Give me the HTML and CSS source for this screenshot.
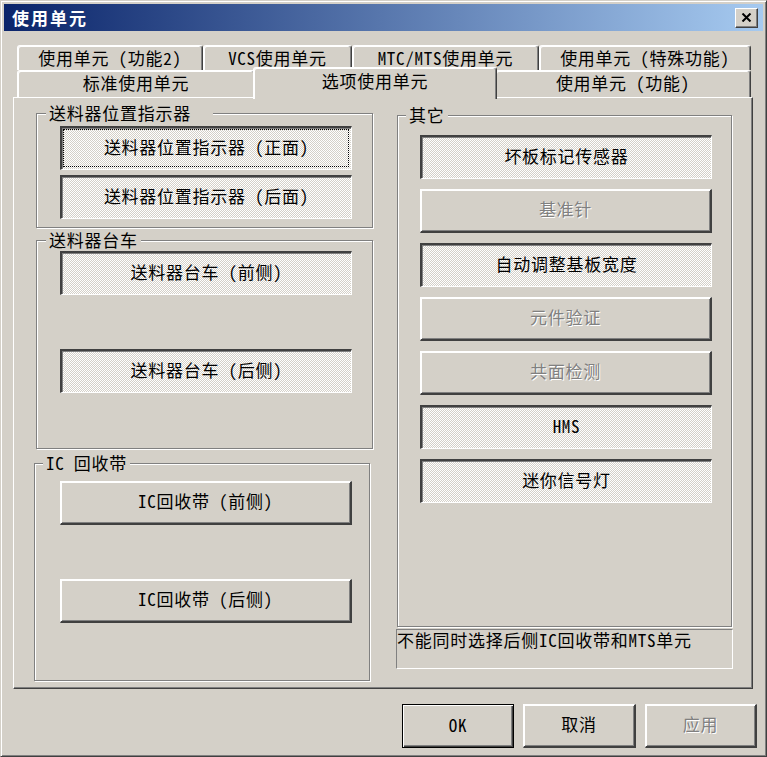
FILE: index.html
```html
<!DOCTYPE html>
<html lang="zh-CN">
<head>
<meta charset="utf-8">
<title>使用单元</title>
<link rel="stylesheet" href="styles.css">
</head>
<body>
<div class="window">
  <div class="titlebar">
    <span class="title">使用单元</span>
    <button class="close" aria-label="关闭">
      <svg width="11" height="9" viewBox="0 0 11 9"><path d="M1.5 0.5L9.5 8.5M9.5 0.5L1.5 8.5" stroke="#000" stroke-width="2" fill="none"/></svg>
    </button>
  </div>
  <div class="content">
    <div class="tabrow row1">
      <div class="tab t1">使用单元 (功能2)</div>
      <div class="tab t2">VCS使用单元</div>
      <div class="tab t3">MTC/MTS使用单元</div>
      <div class="tab t4">使用单元 (特殊功能)</div>
    </div>
    <div class="tabrow row2">
      <div class="tab t5">标准使用单元</div>
      <div class="tab t6 sel">选项使用单元</div>
      <div class="tab t7">使用单元 (功能)</div>
    </div>
    <div class="panel">
      <div class="col">
        <div class="grp g1">
          <span class="grp-label">送料器位置指示器&nbsp;&nbsp;</span>
          <div class="btn on focus b-first">送料器位置指示器 (正面)</div>
          <div class="btn on b-next5">送料器位置指示器 (后面)</div>
        </div>
        <div class="grp g2">
          <span class="grp-label">送料器台车</span>
          <div class="btn on b-g2a">送料器台车 (前侧)</div>
          <div class="btn on b-far">送料器台车 (后侧)</div>
        </div>
        <div class="grp g3">
          <span class="grp-label">IC 回收带</span>
          <div class="btn raised b-g3a">IC回收带 (前侧)</div>
          <div class="btn raised b-far">IC回收带 (后侧)</div>
        </div>
      </div>
      <div class="col">
        <div class="grp g4">
          <span class="grp-label">其它</span>
          <div class="btn on b-r1">坏板标记传感器</div>
          <div class="btn raised disabled b-r">基准针</div>
          <div class="btn on b-r">自动调整基板宽度</div>
          <div class="btn raised disabled b-r">元件验证</div>
          <div class="btn raised disabled b-r">共面检测</div>
          <div class="btn on b-r">HMS</div>
          <div class="btn on b-r">迷你信号灯</div>
        </div>
        <div class="status">不能同时选择后侧IC回收带和MTS单元</div>
      </div>
    </div>
    <div class="actions">
      <div class="btn raised default a-ok">OK</div>
      <div class="btn raised a-cancel">取消</div>
      <div class="btn raised disabled a-apply">应用</div>
    </div>
  </div>
</div>
</body>
</html>
```
FILE: styles.css
```css
* { box-sizing: border-box; }
html, body { margin: 0; padding: 0; }
body {
  width: 767px;
  height: 757px;
  overflow: hidden;
  background: #D4D0C8;
  font-family: "Noto Sans Mono CJK SC", "Noto Sans CJK SC", "Liberation Mono", monospace;
  font-size: 17px;
  letter-spacing: 0.75px;
  color: #000;
}
.window {
  width: 767px;
  height: 757px;
  border: 1px solid;
  border-color: #D4D0C8 #404040 #404040 #D4D0C8;
  box-shadow: inset 1px 1px #fff, inset -1px -1px #808080;
  padding: 3px;
  background: #D4D0C8;
}
.titlebar {
  height: 27px;
  display: flex;
  align-items: center;
  justify-content: space-between;
  padding: 0 5px 0 8px;
  background: linear-gradient(to right, #0A246A, #A6CAF0);
}
.title {
  color: #fff;
  font-weight: bold;
  font-size: 17px;
  letter-spacing: 2px;
  line-height: 20px;
}
.close {
  width: 23px;
  height: 20px;
  padding: 0;
  border: 1px solid;
  border-color: #fff #404040 #404040 #fff;
  box-shadow: inset -1px -1px #808080;
  background: #D4D0C8;
  display: flex;
  align-items: center;
  justify-content: center;
}
.content { padding: 14px 10px 0 9px; }

.tabrow { display: flex; margin-left: 4px; width: 734px; }
.row1 { height: 25px; }
.row2 { height: 27px; align-items: flex-end; }
.tab {
  display: flex;
  align-items: center;
  justify-content: center;
  height: 100%;
  border-style: solid;
  border-width: 1px 1px 0 1px;
  border-color: #fff #404040 transparent #fff;
  box-shadow: inset -1px 0 #808080, inset 1px 1px #fff;
  border-radius: 3px 3px 0 0;
  background: #D4D0C8;
  line-height: 20px;
  white-space: nowrap;
  padding-bottom: 1px;
}
.row2 .tab { padding-bottom: 2px; }
.t1 { width: 186px; }
.t2 { width: 149px; }
.t3 { width: 187px; }
.t4 { width: 212px; }
.t5 { width: 238px; }
.t6 { width: 244px; }
.t7 { width: 256px; }
.tab.sel {
  position: relative;
  z-index: 2;
  height: 32px;
  margin: 0 -2px -2px;
  padding-bottom: 6px;
}

.panel {
  width: 740px;
  height: 592px;
  border: 1px solid;
  border-color: #fff #404040 #404040 #fff;
  box-shadow: inset -1px -1px #808080;
  padding: 15px 0 0 22px;
  display: grid;
  grid-template-columns: 337px 335px;
  column-gap: 24px;
  align-items: start;
}

.grp {
  border: 1px solid #808080;
  box-shadow: inset 1px 1px #fff, 1px 1px #fff;
}
.grp-label {
  display: block;
  width: max-content;
  height: 18px;
  line-height: 18px;
  margin: -10px 0 0 9px;
  padding: 0 3px;
  background: #D4D0C8;
  white-space: pre;
}
.g1 { height: 115px; }
.g2 { height: 209px; margin-top: 12px; }
.g3 { height: 218px; margin-top: 14px; margin-left: -2px; width: 336px; }
.g3 .grp-label { margin-left: 8px; }
.g4 { height: 512px; margin-top: 2px; }
.g4 .grp-label { margin-left: 8px; }

.btn {
  display: flex;
  align-items: center;
  justify-content: center;
  width: 292px;
  height: 44px;
  border-style: solid;
  background: #D4D0C8;
  white-space: nowrap;
  line-height: 20px;
  padding-bottom: 3px;
}
.raised {
  border-width: 1px 2px 2px 1px;
  border-color: #fff #404040 #404040 #fff;
  box-shadow: inset 1px 1px #fff, inset -1px -1px #808080;
}
.on {
  border-width: 2px 1px 1px 2px;
  border-color: #404040 #fff #fff #404040;
  box-shadow: inset 1px 1px #808080;
  background: repeating-conic-gradient(#fff 0 25%, #D4D0C8 0 50%) 0 0 / 2px 2px;
}
.focus { outline: 1px dotted #000; outline-offset: -4px; }
.disabled { color: #808080; text-shadow: 1px 1px #fff; }

.b-first { margin: 4px 0 0 23px; }
.b-next5 { margin: 5px 0 0 23px; }
.b-g2a { margin: 2px 0 0 23px; }
.b-far { margin: 54px 0 0 23px; }
.g3 .b-far { margin-left: 25px; }
.b-g3a { margin: 9px 0 0 25px; }
.b-r1 { margin: 11px 0 0 22px; }
.b-r { margin: 10px 0 0 22px; }

.status {
  margin: 2px 0 0 -1px;
  width: 337px;
  height: 40px;
  border: 1px solid;
  border-color: #808080 #fff #fff #808080;
  line-height: 20px;
  padding-top: 0;
  white-space: nowrap;
}

.actions {
  display: flex;
  justify-content: flex-end;
  gap: 9px;
  margin: 15px -4px 0 0;
}
.actions .btn { width: 112px; }
.actions .a-cancel { width: 113px; }
.default {
  border: 1px solid #000;
  box-shadow: inset 1px 1px #fff, inset -1px -1px #404040, inset -2px -2px #808080;
}
```
